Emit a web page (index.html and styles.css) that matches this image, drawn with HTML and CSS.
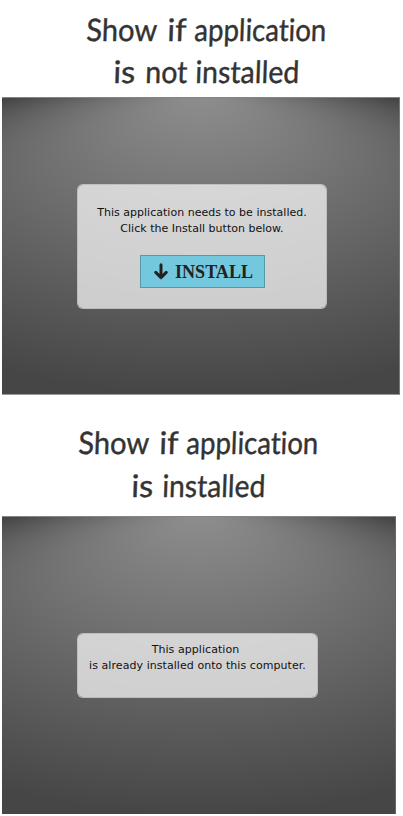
FILE: index.html
```html
<!DOCTYPE html>
<html lang="en">
<head>
<meta charset="utf-8">
<title>Application install states</title>
<link rel="stylesheet" href="styles.css">
</head>
<body>
<main>
  <svg class="heading heading-first" viewBox="0 0 403 97" role="heading" aria-level="1">
    <g transform="translate(0 40.5) skewX(-2)">
      <text x="86" textLength="71" lengthAdjust="spacingAndGlyphs">Show</text>
      <text x="167" textLength="19" lengthAdjust="spacingAndGlyphs">if</text>
      <text x="194" textLength="132" lengthAdjust="spacingAndGlyphs">application</text>
    </g>
    <g transform="translate(0 83) skewX(-2)">
      <text x="113" textLength="22" lengthAdjust="spacingAndGlyphs">is</text>
      <text x="145" textLength="42" lengthAdjust="spacingAndGlyphs">not</text>
      <text x="195" textLength="104" lengthAdjust="spacingAndGlyphs">installed</text>
    </g>
  </svg>
  <section class="stage stage-first">
    <svg class="backdrop" viewBox="0 0 1 1" preserveAspectRatio="none" aria-hidden="true">
      <defs>
        <radialGradient id="glow" gradientUnits="userSpaceOnUse" cx="0" cy="0" r="1" fx="0" fy="-.9" gradientTransform="translate(.5 .465) scale(.95 .535)">
          <stop offset="0" stop-color="#8e8e8e"/>
          <stop offset="1" stop-color="#464646"/>
        </radialGradient>
      </defs>
      <rect width="1" height="1" fill="url(#glow)"/>
    </svg>
    <div class="panel panel-install">
      <p>This application needs to be installed.<br>Click the Install button below.</p>
      <button class="install" type="button">
        <svg class="arrow" viewBox="0 0 14 17" aria-hidden="true"><path d="M7 1.8V14.5M1.8 9.4L7 14.7L12.2 9.4"/></svg>
        <svg class="install-label" viewBox="0 0 86 28"><text x="0" y="20" textLength="78" lengthAdjust="spacingAndGlyphs">INSTALL</text></svg>
      </button>
    </div>
  </section>
  <svg class="heading heading-second" viewBox="0 0 403 121" role="heading" aria-level="1">
    <g transform="translate(0 58.5) skewX(-2)">
      <text x="78" textLength="71" lengthAdjust="spacingAndGlyphs">Show</text>
      <text x="159" textLength="19" lengthAdjust="spacingAndGlyphs">if</text>
      <text x="186" textLength="132" lengthAdjust="spacingAndGlyphs">application</text>
    </g>
    <g transform="translate(0 101.5) skewX(-2)">
      <text x="131" textLength="22" lengthAdjust="spacingAndGlyphs">is</text>
      <text x="162" textLength="103" lengthAdjust="spacingAndGlyphs">installed</text>
    </g>
  </svg>
  <section class="stage stage-second">
    <svg class="backdrop" viewBox="0 0 1 1" preserveAspectRatio="none" aria-hidden="true">
      <rect width="1" height="1" fill="url(#glow)"/>
    </svg>
    <div class="panel panel-done">
      <p><span class="lead">This application</span><br>is already installed onto this computer.</p>
    </div>
  </section>
</main>
</body>
</html>
```
FILE: styles.css
```css
* { box-sizing: border-box; }

body {
  margin: 0;
  background: #fff;
  overflow: hidden;
}

.heading {
  display: block;
  width: 403px;
  font: 31px Lato, sans-serif;
  font-variant-ligatures: none;
  fill: #333;
  stroke: #333;
  stroke-width: .4px;
}
.heading-first { height: 97px; }
.heading-second { height: 121px; }

.stage {
  position: relative;
  height: 298px;
  margin-left: 2px;
  border-top: 1px solid #858585;
}
.stage-first {
  width: 398px;
  padding: 86px 0 0 75px;
  border-right: 1px solid #777;
  border-bottom: 1px solid #999;
}
.stage-second {
  width: 394px;
  padding: 116px 0 0 75px;
  border-right: 1px solid #666;
}

.backdrop {
  position: absolute;
  inset: 0;
  width: 100%;
  height: 100%;
}

.panel {
  position: relative;
  border: 1px solid rgba(205, 205, 205, .85);
  border-radius: 6px;
  background: rgba(255, 255, 255, .7);
  background-clip: padding-box;
  color: #111;
  font: 11px/16px "DejaVu Sans", sans-serif;
  text-align: center;
}
.panel p {
  margin: 0;
  white-space: nowrap;
}
.panel-install {
  width: 250px;
  height: 125px;
  padding-top: 20px;
  letter-spacing: .02px;
}
.panel-done {
  width: 241px;
  height: 65px;
  padding-top: 8px;
  letter-spacing: .06px;
}
.lead {
  position: relative;
  left: -2px;
}

.install {
  display: flex;
  align-items: center;
  width: 125px;
  height: 33px;
  margin: 18px 0 0 62px;
  padding: 0 0 0 13px;
  gap: 7px;
  border: 1px solid #559aaa;
  background: #74c8de;
}
.arrow {
  flex: none;
  width: 14px;
  height: 17px;
  fill: none;
  stroke: #222;
  stroke-width: 3;
  stroke-linecap: round;
  stroke-linejoin: round;
}
.install-label {
  flex: none;
  width: 86px;
  height: 28px;
  font: bold 19px "Liberation Serif", serif;
  letter-spacing: 0;
  fill: #222;
}
```
